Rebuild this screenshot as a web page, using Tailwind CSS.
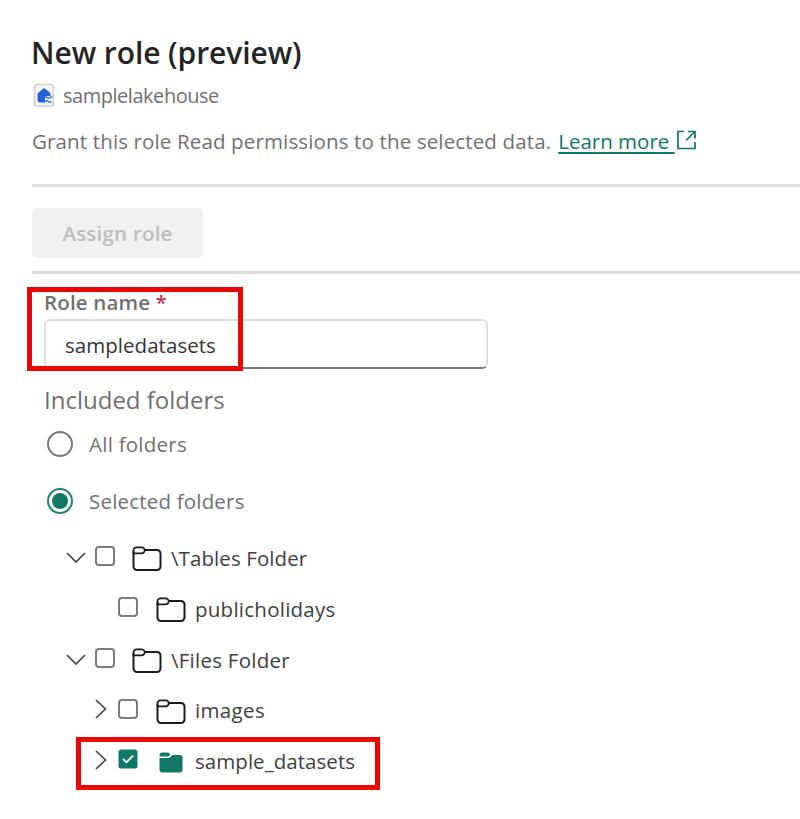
<!DOCTYPE html>
<html lang="en">
<head>
<meta charset="utf-8">
<title>New role (preview)</title>
<script src="https://cdn.jsdelivr.net/npm/@tailwindcss/browser@4"></script>
</head>
<body class="bg-white">
<svg class="hidden">
  <symbol id="folder" viewBox="0 0 30 26"><g fill="none" stroke="#1c1c1c" stroke-width="2"><path d="M1.500 5V20.500a3.500 3.500 0 0 0 3.500 3.500H25a3.500 3.500 0 0 0 3.500-3.500V7.500a3.500 3.500 0 0 0-3.500-3.500H13"/><path stroke-width="1.800" d="M4.700 1.300H9.500C11.500 1.300 12.800 3 12.800 4.300S11.500 7.300 9.500 7.300H1.500V4.500A3.200 3.200 0 0 1 4.700 1.300Z"/></g></symbol>
  <symbol id="down" viewBox="0 0 20 12"><path d="M1 1L10 10L19 1" fill="none" stroke="#484848" stroke-width="1.700"/></symbol>
  <symbol id="right" viewBox="0 0 12 20"><path d="M1 1L10.500 10L1 19" fill="none" stroke="#484848" stroke-width="1.700"/></symbol>
</svg>
<main class="relative w-[800px] h-[819px] overflow-hidden bg-white font-['Open_Sans','Noto_Sans',sans-serif] text-[20.5px] text-[#707070] whitespace-nowrap">
  <header class="pl-8 pt-[29px] h-[184px]">
    <h1 class="h-[45px] leading-[47px] text-[30px] font-semibold text-[#242424]"><span class="inline-block -ml-px tracking-[-0.07px]">New role (preview)</span></h1>
    <div class="flex items-center h-[42px]">
      <svg class="w-[24px] h-[26px] mr-[7px]" viewBox="0 0 24 26"><rect x="2.500" y="2.500" width="19" height="21.500" rx="3" fill="#f6f6f6" stroke="#cdcdcd" stroke-width="1.600"/><path d="M5.500 11.500L12 6L18.500 11V14H13V20.500H8Q5.500 20.500 5.500 18.500Z" fill="#2461d3"/><path d="M12 15.500q1.500-1.400 3 0t3 0 2 0M13.500 19.500q1.500-1.400 3 0t3 0" fill="none" stroke="#3d7be5" stroke-width="1.700"/></svg>
      <span class="text-[20px] tracking-[-0.47px] pt-[2px]">samplelakehouse</span>
    </div>
    <p class="flex items-center h-[50px]"><span class="tracking-[0.14px]">Grant this role Read permissions to the selected data.</span><a class="ml-[7px] flex items-center text-[#117865]"><span class="underline decoration-[1.500px] underline-offset-[3px] whitespace-pre">Learn more </span><svg class="w-[20px] h-[20px] ml-[2px] mb-[2px]" viewBox="0 0 20 20" fill="none" stroke="currentColor" stroke-width="1.700"><path d="M7 1.500H1V18.500H18V12M11 1.500H18V8.500M18 1.500L9 10.500"/></svg></a></p>
  </header>
  <div class="ml-8 h-[3px] bg-[#dededc]"></div>
  <div class="pl-8 pt-[21px] h-[84px]">
    <button class="w-[171px] h-[50px] rounded-[5px] bg-[#f0f0f0] text-[#bdbdbd] font-semibold tracking-[0.22px]">Assign role</button>
  </div>
  <div class="ml-8 h-[3px] bg-[#dededc]"></div>
  <section class="pl-[44px] pt-[13px]">
    <label class="block h-[32px] leading-[31px] font-semibold"><span class="tracking-[0.15px]">Role name</span> <span class="text-[#c4314b]">*</span></label>
    <div class="flex items-center w-[444px] h-[50px] pl-[19px] pt-[3px] rounded-[6px] border-2 border-b-2 border-[#dedede] border-b-[#7b7b7b] text-[#343434]"><span class="tracking-[0.04px]">sampledatasets</span></div>
    <h2 class="mt-[13px] h-[36px] leading-[36px] text-[24px]"><span>Included folders</span></h2>
    <label class="flex items-center h-[52px] pl-[3px]"><i class="w-[26px] h-[26px] rounded-full border-2 border-[#777]"></i><span class="ml-[16px] tracking-[0.25px]">All folders</span></label>
    <label class="flex items-center h-[62px] pl-[3px]"><i class="w-[26px] h-[26px] rounded-full border-2 border-[#218370] flex items-center justify-center"><b class="w-[16px] h-[16px] rounded-full bg-[#117865]"></b></i><span class="ml-[16px] tracking-[0.19px]">Selected folders</span></label>
  </section>
  <ul class="text-[#404040] pl-[66px] pt-px">
    <li class="flex items-center h-[50.750px]"><svg class="w-5 h-3"><use href="#down"/></svg><i class="w-[20px] h-[20px] mb-[4px] ml-[9px] border-2 border-[#7c7c7c] rounded-[4px]"></i><svg class="w-[30px] h-[26px] ml-[17px] mt-[2px]"><use href="#folder"/></svg><span class="ml-[9px] tracking-[0.09px]">\Tables Folder</span></li>
    <li class="flex items-center h-[50.750px] pl-[52px]"><i class="w-[20px] h-[20px] mb-[4px] border-2 border-[#7c7c7c] rounded-[4px]"></i><svg class="w-[30px] h-[26px] ml-[18px] mt-[2px]"><use href="#folder"/></svg><span class="ml-[9px] tracking-[0.25px]">publicholidays</span></li>
    <li class="flex items-center h-[50.750px]"><svg class="w-5 h-3"><use href="#down"/></svg><i class="w-[20px] h-[20px] mb-[3px] ml-[9px] border-2 border-[#7c7c7c] rounded-[4px]"></i><svg class="w-[30px] h-[26px] ml-[17px] mt-[2px]"><use href="#folder"/></svg><span class="ml-[9px] tracking-[0.25px]">\Files Folder</span></li>
    <li class="flex items-center h-[50.750px] pl-[29px]"><svg class="w-3 h-5 mb-[3px]"><use href="#right"/></svg><i class="w-[20px] h-[20px] mb-[4px] ml-[11px] border-2 border-[#7c7c7c] rounded-[4px]"></i><svg class="w-[30px] h-[26px] ml-[18px] mt-[2px]"><use href="#folder"/></svg><span class="ml-[9px] tracking-[0.35px]">images</span></li>
    <li class="flex items-center h-[50.750px] pl-[29px]"><svg class="w-3 h-5 mb-[3px]"><use href="#right"/></svg><svg class="w-[20px] h-[20px] mb-[4px] ml-[11px]" viewBox="0 0 20 20"><rect x=".5" y=".5" width="19" height="19" rx="2.500" fill="#117865"/><path d="M5 10L8.500 13.300L15 6.700" fill="none" stroke="#fff" stroke-width="1.800"/></svg><svg class="w-[24px] h-[21px] ml-[21px] mt-[2px]" viewBox="0 0 24 21" fill="#117865"><path d="M.5 4.500V3.500Q.5.500 3.500.500H8.500Q9.500.500 10.200 1.200L11.500 2.500L9.200 4.500Z"/><path d="M.5 6H9Q10 6 11 5.200L13.500 3H20.500Q23.500 3 23.500 6V17.500Q23.500 20.500 20.500 20.500H3.500Q.5 20.500.5 17.500Z"/></svg><span class="ml-[12px] pb-px tracking-[0.05px]">sample_datasets</span></li>
  </ul>
  <div class="absolute left-[27px] top-[287px] w-[216px] h-[84px] border-5 border-[#ec0505]"></div>
  <div class="absolute left-[76px] top-[737px] w-[304px] h-[53px] border-5 border-[#ec0505]"></div>
</main>
</body>
</html>
